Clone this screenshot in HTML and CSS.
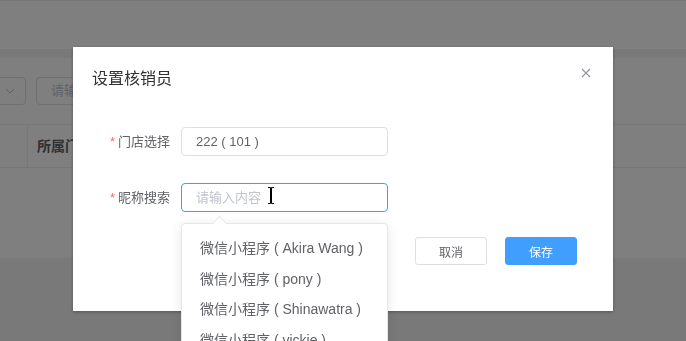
FILE: index.html
```html
<!doctype html>
<html lang="zh-CN">
<head>
<meta charset="UTF-8">
<title>设置核销员</title>
<link rel="stylesheet" href="styles.css">
</head>
<body>
<div class="page">
  <div class="topbar"></div>
  <div class="band"></div>
  <div class="card">
    <div class="filters">
      <div class="fselect">
        <svg viewBox="0 0 10 6" class="chev"><polyline points="1,1 5,5 9,1" fill="none" stroke="#c0c4cc" stroke-width="1"/></svg>
      </div>
      <div class="finput">请输</div>
    </div>
    <div class="table">
      <div class="th first"></div>
      <div class="th">所属门店</div>
    </div>
  </div>
</div>

<div class="mask"></div>

<div class="dialog">
  <div class="dialog-header">
    <span class="dialog-title">设置核销员</span>
    <svg class="close" viewBox="0 0 10 10"><path d="M1 1L9 9M9 1L1 9" stroke="#909399" stroke-width="1.1" fill="none"/></svg>
  </div>
  <div class="form">
    <div class="form-item">
      <label class="label"><span class="star">*</span>门店选择</label>
      <div class="input">222 ( 101 )</div>
    </div>
    <div class="form-item">
      <label class="label"><span class="star">*</span>昵称搜索</label>
      <div class="input focus">
        <span class="placeholder">请输入内容</span>
        <svg class="ibeam" viewBox="0 0 8 17"><path d="M1 0.5H3.5V16.5H1M7 0.5H4.5V16.5H7" stroke="#000" stroke-width="1" fill="none"/></svg>
        <div class="suggest">
          <span class="arrow"></span>
          <ul>
            <li>微信小程序 ( Akira Wang )</li>
            <li>微信小程序 ( pony )</li>
            <li>微信小程序 ( Shinawatra )</li>
            <li>微信小程序 ( vickie )</li>
          </ul>
        </div>
      </div>
    </div>
  </div>
  <div class="footer">
    <button class="btn">取消</button>
    <button class="btn primary">保存</button>
  </div>
</div>
</body>
</html>
```

FILE: styles.css
```css
html, body {margin: 0; height: 100%; overflow: hidden;}
body {font-family: "Liberation Sans", "Noto Sans CJK SC", sans-serif; background: #f2f3f5; color: #606266;}

.page {height: 100%;}
.topbar {height: 48px; background: #fff; border-top: 1px solid #ececec;}
.band {height: 9px; background: #f2f3f5;}
.card {height: 200px; background: #fff; overflow: hidden;}
.filters {display: flex; gap: 10px; padding-top: 19px; margin-left: -42px;}
.fselect {width: 56px; height: 26px; border: 1px solid #dcdfe6; border-radius: 4px; display: flex; align-items: center; justify-content: flex-end; padding-right: 10px;}
.chev {width: 10px; height: 6px;}
.finput {width: 40px; height: 26px; border: 1px solid #dcdfe6; border-radius: 4px; font-size: 13px; line-height: 26px; padding-left: 14px; color: #c0c4cc; overflow: hidden; white-space: nowrap;}
.table {display: flex; margin-top: 19px; border-top: 1px solid #ebeef5; border-bottom: 1px solid #ebeef5; height: 42px;}
.th {font-size: 14px; font-weight: bold; color: #606266; line-height: 42px; padding-left: 9px;}
.th.first {width: 27px; padding: 0; border-right: 1px solid #ebeef5;}

.mask {position: fixed; inset: 0; background: rgba(0, 0, 0, 0.5);}

.dialog {position: absolute; top: 47px; left: 73px; width: 540px; background: #fff; box-shadow: 0 1px 3px rgba(0, 0, 0, 0.3); padding-bottom: 46px;}
.dialog-header {display: flex; justify-content: space-between; align-items: flex-start; padding: 18px 22px 0 19px;}
.dialog-title {font-size: 16px; line-height: 24px; color: #303133; font-family: "Noto Sans CJK SC", sans-serif;}
.close {width: 10px; height: 10px; margin-top: 3px;}

.form {margin-top: 38px; display: flex; flex-direction: column; gap: 27px;}
.form-item {display: flex;}
.label {width: 97px; padding-right: 11px; text-align: right; font-size: 13px; line-height: 28px; color: #606266; font-family: "Noto Sans CJK SC", sans-serif;}
.star {color: #f56c6c; margin-right: 3px; font-family: "Liberation Sans", sans-serif;}
.input {position: relative; box-sizing: border-box; width: 207px; height: 29px; border: 1px solid #dcdfe6; border-radius: 4px; padding-left: 14px; font-size: 13px; line-height: 27px; color: #606266;}
.input.focus {border-color: #409eff; line-height: 25px;}
.placeholder {color: #c0c4cc; font-family: "Noto Sans CJK SC", sans-serif;}
.ibeam {position: absolute; left: 85px; top: 3px; width: 8px; height: 17px;}

.suggest {position: absolute; top: 39px; left: -1px; width: 205px; height: 140px; background: #fff; border: 1px solid #e4e7ed; border-radius: 4px; box-shadow: 0 2px 12px rgba(0, 0, 0, 0.1);}
.arrow {position: absolute; top: -6px; left: 32px; width: 10px; height: 10px; background: #fff; border-left: 1px solid #e4e7ed; border-top: 1px solid #e4e7ed; transform: rotate(45deg);}
.suggest ul {list-style: none; margin: 0; padding: 9px 0 0; position: relative;}
.suggest li {font-size: 14px; line-height: 30.5px; padding-left: 18px; color: #606266; white-space: nowrap;}

.footer {display: flex; justify-content: flex-end; gap: 18px; padding-right: 36px; margin-top: 25px;}
.btn {width: 72px; height: 28px; border: 1px solid #dcdfe6; border-radius: 3px; background: #fff; color: #606266; font-size: 12px; font-family: "Noto Sans CJK SC", sans-serif; padding: 0;}
.btn.primary {background: #409eff; border-color: #409eff; color: #fff;}
```
